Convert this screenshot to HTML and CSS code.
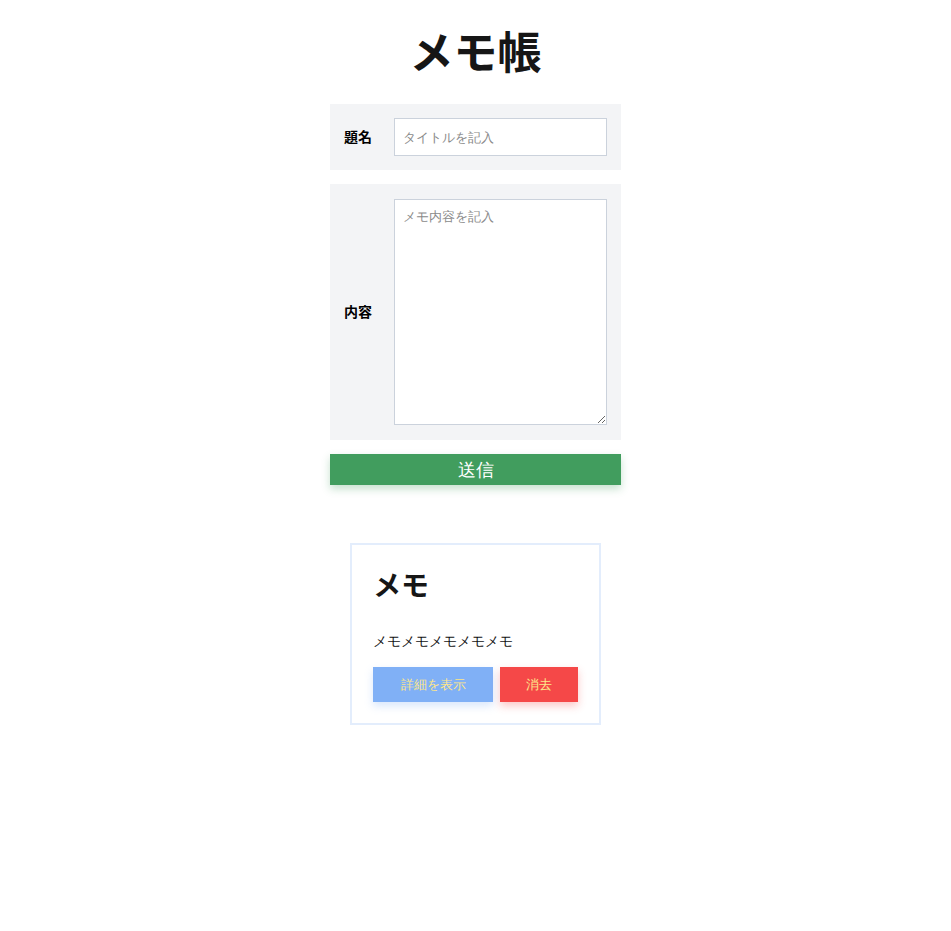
FILE: index.html
```html
<!DOCTYPE html>
<html>
<head>
<meta charset="UTF-8">
<title>メモ帳</title>
<link rel="stylesheet" href="styles.css">
</head>
<body>
	<h1 class="title">メモ帳</h1>
	<form class="memo-form">
		<label class="row">
			<span class="label">題名</span>
			<input class="field" placeholder="タイトルを記入"/>
		</label>
		<label class="row">
			<span class="label">内容</span>
			<textarea class="field area" placeholder="メモ内容を記入"></textarea>
		</label>
		<button type="button" class="submit">送信</button>
	</form>

	<div class="card">
		<h2 class="card-title">メモ</h2>
		<p class="card-body">メモメモメモメモメモ</p>
		<div class="actions">
			<button type="button" class="btn detail">詳細を表示</button>
			<button type="button" class="btn remove">消去</button>
		</div>
	</div>
</body>
</html>
```

FILE: styles.css
```css
body{
	margin: 0;
	padding-top: 24px;
	background: white;
	color: #111;
}
.title{
	margin: 0 0 28px;
	text-align: center;
	font: bold 44px/52px "Noto Sans CJK JP", sans-serif;
	color: #161616;
}
.memo-form{
	width: 291px;
	margin: 0 auto;
	display: flex;
	flex-direction: column;
	gap: 14px;
}
.row{
	display: flex;
	align-items: center;
	background: #f3f4f6;
	padding: 14px 14px;
}
.label{
	width: 50px;
	flex: none;
	padding-bottom: 3px;
	font: bold 14px "Noto Sans CJK JP", sans-serif;
	color: #000;
}
.field{
	flex: 1;
	box-sizing: border-box;
	height: 38px;
	margin: 0;
	padding: 0 8px;
	border: 1px solid #cbd2dc;
	border-radius: 0;
	background: white;
	font-size: 13px;
}
.field::placeholder{ color: #8a8a8a; }
.area{
	height: 226px;
	margin: 1px 0;
	padding: 8px;
	resize: vertical;
}
.submit{
	height: 31px;
	margin: 0;
	border: 0;
	background: #419d5e;
	color: white;
	font-size: 18px;
	box-shadow: 0 4px 8px rgba(65,157,94,.3);
}

.card{
	width: 251px;
	box-sizing: border-box;
	margin: 58px auto 0;
	padding: 19px 21px 21px;
	border: 2px solid #e3edfc;
}
.card-title{
	margin: 0;
	font: bold 28px/40px "Noto Sans CJK JP", sans-serif;
	color: #161616;
}
.card-body{
	margin: 27px 0 14px;
	font-size: 14px;
	line-height: 22px;
}
.actions{
	display: flex;
	gap: 7px;
}
.btn{
	height: 35px;
	margin: 0;
	border: 0;
	font-size: 13px;
	color: #fde68a;
}
.detail{
	width: 120px;
	background: #80b0f6;
	box-shadow: 0 4px 8px rgba(128,176,246,.3);
}
.remove{
	width: 78px;
	background: #f54848;
	box-shadow: 0 4px 8px rgba(245,72,72,.3);
}
```
